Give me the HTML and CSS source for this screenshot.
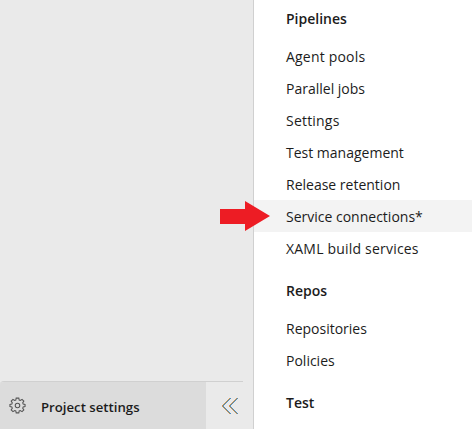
FILE: index.html
```html
<!DOCTYPE html>
<html lang="en">
<head>
<meta charset="utf-8">
<title>Project settings</title>
<link rel="stylesheet" href="styles.css">
</head>
<body>
<div class="app">
  <aside class="sidebar">
    <div class="footer">
      <div class="project">
        <svg class="gear" viewBox="0 0 18 18"><path d="M7.6 1.2h2.8l.4 2 1.2.5 1.8-1.2 1.9 1.9-1.2 1.8.5 1.2 2 .4v2.4l-2 .4-.5 1.2 1.2 1.8-1.9 1.9-1.8-1.2-1.2.5-.4 2H7.6l-.4-2-1.2-.5-1.8 1.2-1.9-1.9 1.2-1.8-.5-1.2-2-.4V7.8l2-.4.5-1.2-1.2-1.8 1.9-1.9L6 3.7l1.2-.5z"/><circle cx="9" cy="9" r="2.4"/></svg>
        <span>Project settings</span>
      </div>
      <div class="collapse">
        <svg class="chevrons" viewBox="0 0 18 18"><path class="warm" d="M8.5 1L.5 9l8 8M15.5 1l-8 8 8 8"/><path class="cool" d="M9.5 1l-8 8 8 8M16.5 1l-8 8 8 8"/></svg>
      </div>
    </div>
  </aside>
  <nav class="menu">
    <h2 class="first">Pipelines</h2>
    <a class="loose">Agent pools</a>
    <a>Parallel jobs</a>
    <a class="loose">Settings</a>
    <a>Test management</a>
    <a>Release retention</a>
    <a class="selected">Service connections*<svg class="arrow" viewBox="0 0 50 30"><path d="M0 8h25V0l25 15-25 15v-7H0z"/></svg></a>
    <a class="loose">XAML build services</a>
    <h2>Repos</h2>
    <a>Repositories</a>
    <a>Policies</a>
    <h2>Test</h2>
  </nav>
</div>
</body>
</html>
```
FILE: styles.css
```css
* { box-sizing: border-box; }
body {
  margin: 0;
  font-family: "Open Sans", "Noto Sans", sans-serif;
  font-size: 14px;
  color: #1c1c1c;
}
.app { display: flex; height: 429px; overflow: hidden; }
.sidebar {
  width: 254px;
  flex: none;
  display: flex;
  flex-direction: column;
  justify-content: flex-end;
  background: #eaeaea;
  border-right: 1px solid #d0d0d0;
}
.footer { display: flex; width: 243px; height: 48px; border-top: 1px solid #d0d0d0; border-top-left-radius: 4px; overflow: hidden; }
.project {
  display: flex;
  align-items: center;
  width: 206px;
  padding: 3px 0 0 9px;
  background: #dcdcdc;
  font-size: 13.2px;
  font-weight: 600;
}
.gear { width: 17px; height: 17px; margin: -4px 15px 0 0; fill: none; stroke: #555; stroke-width: 1.1; }
.collapse { display: flex; align-items: center; padding: 1px 0 0 15px; }
.chevrons { width: 18px; height: 18px; fill: none; stroke-width: 0.9; shape-rendering: crispEdges; }
.warm { stroke: #c8883f; }
.cool { stroke: #3a84bd; }
.menu { flex: 1; background: #fff; }
.menu h2, .menu a { display: flex; align-items: center; margin: 0; padding-left: 32px; white-space: nowrap; }
.menu h2 { height: 48px; padding-top: 4px; font-size: 14px; font-weight: 600; }
.menu .first { margin-top: -8px; }
.menu a { position: relative; height: 32px; padding-top: 1px; }
.menu .loose { letter-spacing: 0.2px; }
.menu .selected { background: #f3f3f3; }
.arrow { position: absolute; left: -34px; top: 1px; width: 50px; height: 30px; fill: #ed1c24; }
```
